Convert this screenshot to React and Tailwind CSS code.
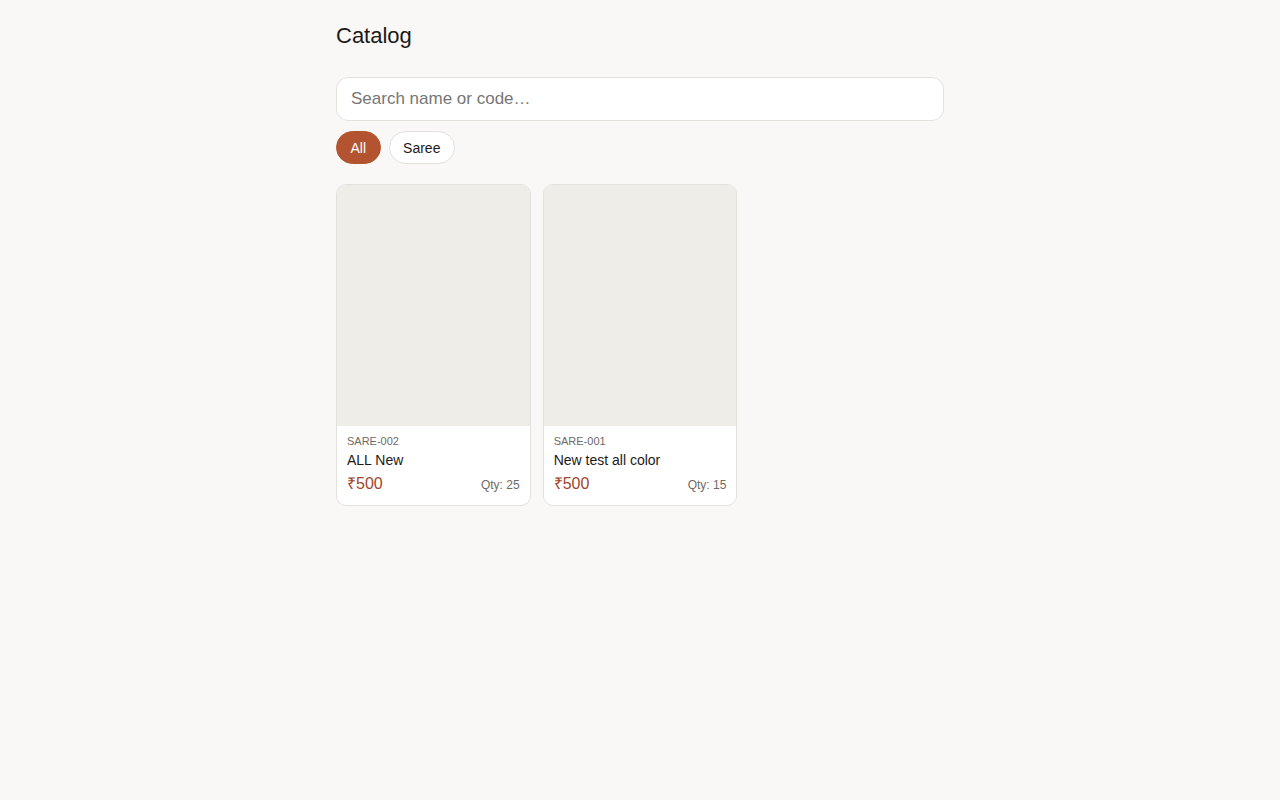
const products = [
  { code: 'SARE-002', name: 'ALL New', price: 500, qty: 25 },
  { code: 'SARE-001', name: 'New test all color', price: 500, qty: 15 },
]

const categories = ['All', 'Saree']

export default function App() {
  return (
    <div className="min-h-screen bg-[#faf8f6] text-[#1c1a18]" style={{ fontFamily: '"Liberation Sans", Arial, sans-serif' }}>
      <div className="max-w-2xl mx-auto px-8 pt-[22px]">
        <h1 className="text-[22px] leading-[28px]">Catalog</h1>

        <input
          type="text"
          placeholder="Search name or code…"
          className="mt-[27px] w-full h-[44px] bg-white border border-[#e4e0db] rounded-xl px-[14px] text-[17px] placeholder:text-[#767676] focus:outline-none"
        />

        {/* Category chips */}
        <div className="flex gap-2 mt-[10px]">
          {categories.map((c, i) => (
            <button
              key={c}
              className={
                i === 0
                  ? 'h-[33px] px-[13.5px] rounded-full text-sm bg-[#b3532f] text-white border border-[#b3532f]'
                  : 'h-[33px] px-[13.5px] rounded-full text-sm bg-white text-[#1c1a18] border border-[#e4e0db]'
              }
            >
              {c}
            </button>
          ))}
        </div>

        {/* Product grid */}
        <div className="grid grid-cols-3 gap-3 mt-[20px]">
          {products.map(p => (
            <div key={p.code} className="bg-white border border-[#e4e0db] rounded-[10px] overflow-hidden">
              <div className="aspect-[4/5] bg-[#efede8]" />
              <div className="px-[10px] pt-[8px] pb-[11px]">
                <div className="text-[11px] leading-[14px] text-[#6f6a64]">{p.code}</div>
                <div className="text-sm leading-[18px] mt-[3px]">{p.name}</div>
                <div className="flex items-end justify-between mt-[5px]">
                  <span className="text-[16px] leading-[20px] text-[#a1462a]">₹{p.price}</span>
                  <span className="text-xs leading-[16px] mb-[1px] text-[#6f6a64]">Qty: {p.qty}</span>
                </div>
              </div>
            </div>
          ))}
        </div>
      </div>
    </div>
  )
}
